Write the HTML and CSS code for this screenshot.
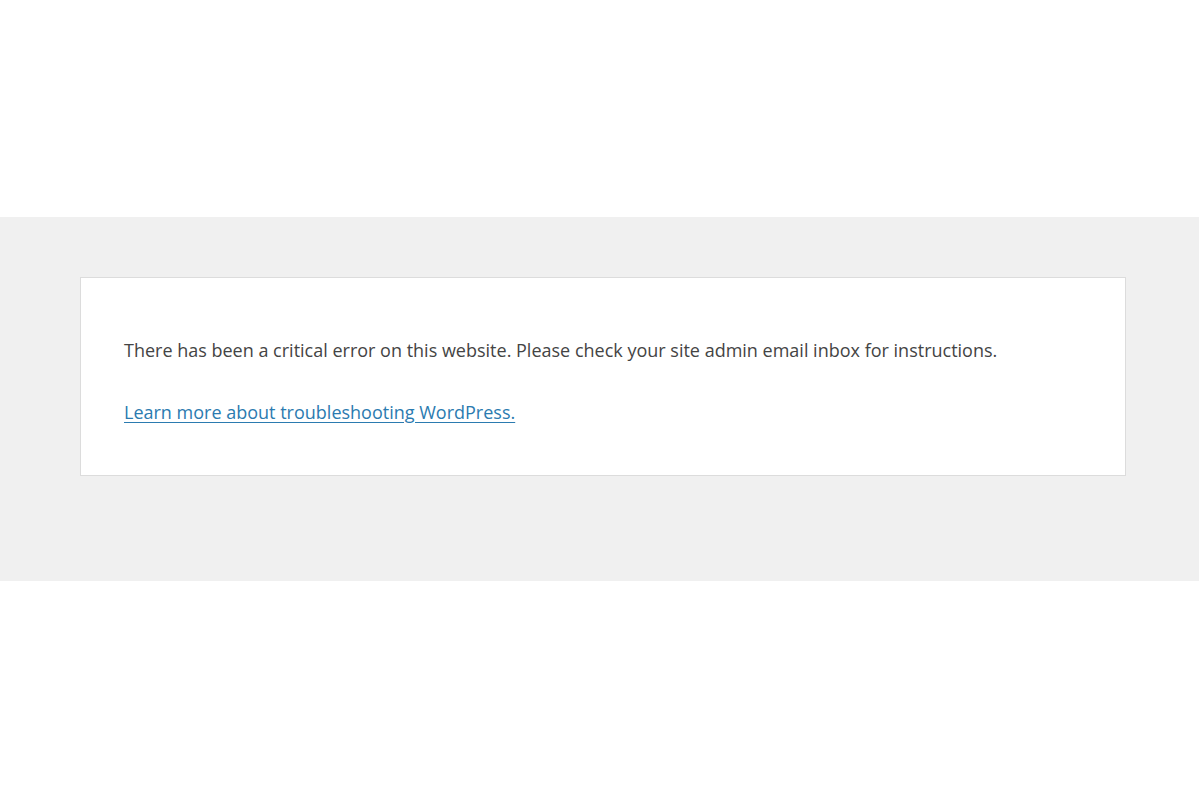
FILE: index.html
```html
<!DOCTYPE html>
<html lang="en">
<head>
<meta charset="utf-8">
<title>WordPress › Error</title>
<link rel="stylesheet" href="styles.css">
</head>
<body>
<div class="top"></div>
<section class="band">
  <div class="card">
    <p class="msg">There has been a critical error on this website. Please check your site admin email inbox for instructions.</p>
    <p class="more"><a href="#">Learn more about troubleshooting WordPress.</a></p>
  </div>
</section>
</body>
</html>
```

FILE: styles.css
```css
html, body {
  margin: 0;
  padding: 0;
  background: #ffffff;
}
body {
  font-family: "Open Sans", "Noto Sans", sans-serif;
  color: #444444;
}
.top {
  height: 217px;
}
.band {
  background: #f0f0f0;
  height: 364px;
  box-sizing: border-box;
  padding: 60px 73px 0 80px;
}
.card {
  background: #ffffff;
  border: 1px solid #dcdcdc;
  height: 199px;
  box-sizing: border-box;
  padding: 0 43px;
  display: flex;
  flex-direction: column;
}
.msg {
  margin: 60px 0 0;
  font-size: 18px;
  line-height: 24px;
}
.more {
  margin: 38px 0 0;
  font-size: 18px;
  line-height: 24px;
}
.more a {
  color: #2b7bb0;
  text-decoration: underline;
  text-underline-offset: 3px;
}
```
